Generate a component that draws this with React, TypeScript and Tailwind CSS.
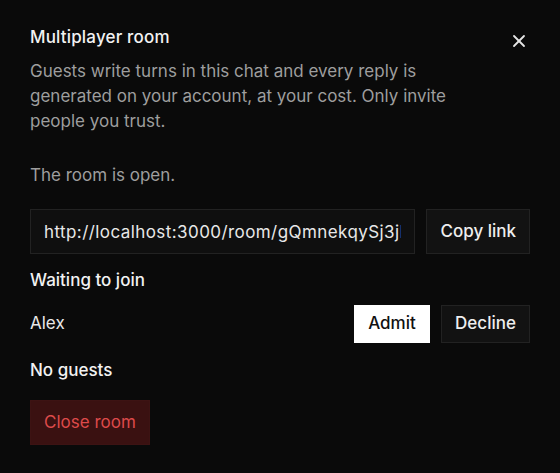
import { X } from "lucide-react";

export default function App() {
  return (
    <div
      className="min-h-[473px] w-full bg-[#0a0a0a] px-[30px] pt-[25px] text-[#ededed]"
      style={{ fontFamily: "Inter, 'Liberation Sans', sans-serif" }}
    >
      <div className="flex items-start justify-between">
        <h2 className="text-[17px] font-medium leading-6 tracking-[0.01em] text-[#f2f2f2]">Multiplayer room</h2>
        <button className="mr-[1px] mt-[6px] text-[#e5e5e5]" aria-label="Close">
          <X size={20} strokeWidth={2.2} />
        </button>
      </div>
      <p className="mt-2 text-[17px] leading-[25px] text-[#9e9e9e]">
        Guests write turns in this chat and every reply is
        <br />
        generated on your account, at your cost. Only invite
        <br />
        people you trust.
      </p>
      <p className="mt-[29px] text-[17px] leading-[25px] text-[#9e9e9e]">The room is open.</p>

      <div className="mt-[21px] flex items-stretch gap-[11px]">
        <input
          readOnly
          value="http://localhost:3000/room/gQmnekqySj3jIk9aPz"
          className="h-[45px] min-w-0 flex-1 border border-[#222222] bg-[#0f0f0f] px-[13px] text-[17px] tracking-[0.025em] text-[#e8e8e8] outline-none"
          style={{ fontFamily: "Inter, 'Liberation Sans', sans-serif" }}
        />
        <button className="h-[45px] border border-[#222222] bg-[#121212] px-[13px] text-[17px] font-medium text-[#eeeeee]">
          Copy link
        </button>
      </div>

      <h3 className="mt-[14px] text-[17px] font-medium leading-6 text-[#f2f2f2]">Waiting to join</h3>
      <div className="mt-[13px] flex items-center justify-between">
        <span className="text-[17px] text-[#e8e8e8]">Alex</span>
        <div className="flex gap-[11px]">
          <button className="h-[38px] w-[76px] border border-white bg-white text-[17px] font-medium text-[#111111]">
            Admit
          </button>
          <button className="h-[38px] w-[89px] border border-[#222222] bg-[#121212] text-[17px] font-medium text-[#eeeeee]">
            Decline
          </button>
        </div>
      </div>

      <h3 className="mt-[15px] text-[17px] font-medium leading-6 text-[#f2f2f2]">No guests</h3>
      <button className="mt-[18px] h-[45px] border border-[#3d1313] bg-[#3a1111] px-[13px] text-[17px] text-[#dd4a4a]">
        Close room
      </button>
    </div>
  );
}
